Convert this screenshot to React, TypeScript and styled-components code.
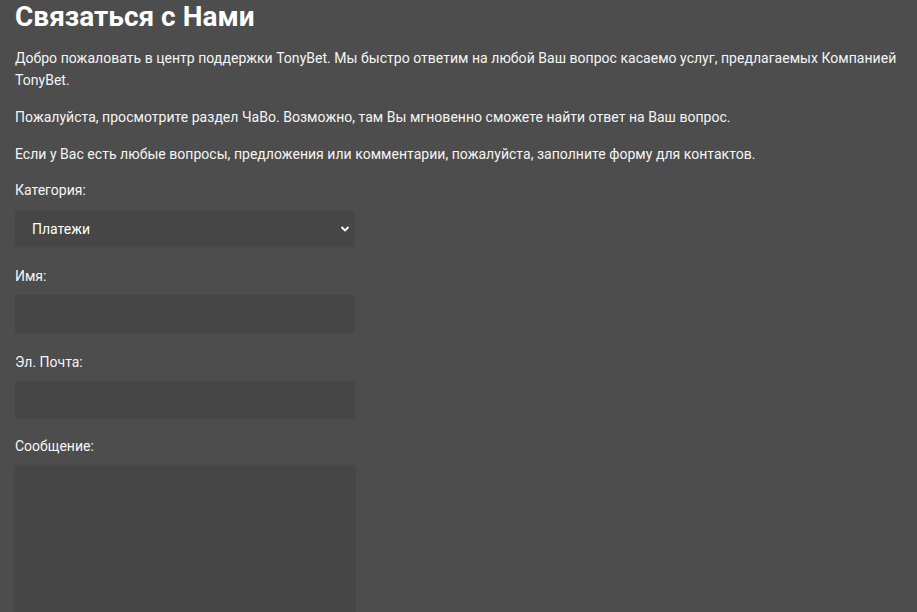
import React from "react";
import styled, { createGlobalStyle } from "styled-components";

const Global = createGlobalStyle`
  html, body { margin: 0; padding: 0; background: #4d4d4d; }
  body { font-family: Roboto, "Liberation Sans", Arial, sans-serif; color: #f5f5f5; }
  * { box-sizing: border-box; }
`;

const Page = styled.main`
  padding: 0 15px 40px 15px;
  min-height: 100vh;
  background: #4d4d4d;
`;

const Title = styled.h1`
  margin: 0;
  font-size: 28px;
  line-height: 33px;
  font-weight: 700;
  color: #ffffff;
`;

const Text = styled.p`
  margin: 15px 0 0 0;
  font-size: 14px;
  line-height: 22px;
  letter-spacing: 0.03px;
  color: #f5f5f5;
`;

const Intro = styled.div`
  padding-top: 14px;
  ${Text}:first-child { margin-top: 0; }
`;

const Form = styled.form`
  display: flex;
  flex-direction: column;
  gap: 18px;
  margin-top: 14px;
  width: 340px;
`;

const Field = styled.div<{ $gap?: number; $shift?: number }>`
  display: flex;
  flex-direction: column;
  gap: ${(p) => p.$gap ?? 8}px;
  margin-top: ${(p) => p.$shift ?? 0}px;
`;

const Label = styled.label`
  font-size: 14px;
  line-height: 22px;
  color: #f5f5f5;
`;

const SelectWrap = styled.div`
  position: relative;
  height: 36px;
`;

const Select = styled.select`
  appearance: none;
  -webkit-appearance: none;
  width: 100%;
  height: 100%;
  border: none;
  border-radius: 2px;
  background: #464646;
  color: #ffffff;
  font-family: Roboto, "Liberation Sans", Arial, sans-serif;
  font-size: 14px;
  padding: 0 30px 0 17px;
  outline: none;
`;

const Chevron = styled.svg`
  position: absolute;
  right: 5px;
  top: 50%;
  width: 10px;
  height: 8px;
  margin-top: -4px;
  pointer-events: none;
`;

const Input = styled.input`
  width: 100%;
  height: 38px;
  border: none;
  border-radius: 2px;
  background: #464646;
  color: #fff;
  font-family: Roboto, "Liberation Sans", Arial, sans-serif;
  font-size: 14px;
  padding: 0 17px;
  outline: none;
`;

const TextArea = styled.textarea`
  width: 342px;
  margin-left: -1px;
  height: 200px;
  border: none;
  border-radius: 4px;
  background: #464646;
  color: #fff;
  resize: none;
  outline: none;
  font-family: Roboto, "Liberation Sans", Arial, sans-serif;
  font-size: 14px;
  padding: 10px 17px;
`;

export default function App() {
  return (
    <>
      <Global />
      <Page>
        <Title>Связаться с Нами</Title>
        <Intro>
          <Text>
            Добро пожаловать в центр поддержки TonyBet. Мы быстро ответим на любой Ваш вопрос касаемо услуг, предлагаемых Компанией TonyBet.
          </Text>
          <Text>
            Пожалуйста, просмотрите раздел ЧаВо. Возможно, там Вы мгновенно сможете найти ответ на Ваш вопрос.
          </Text>
          <Text>
            Если у Вас есть любые вопросы, предложения или комментарии, пожалуйста, заполните форму для контактов.
          </Text>
        </Intro>
        <Form onSubmit={(e) => e.preventDefault()}>
          <Field $gap={10}>
            <Label htmlFor="cat">Категория:</Label>
            <SelectWrap>
              <Select id="cat" defaultValue="pay">
                <option value="pay">Платежи</option>
                <option value="acc">Аккаунт</option>
              </Select>
              <Chevron viewBox="0 0 10 8">
                <path d="M1.5 2 L5 5.5 L8.5 2" fill="none" stroke="#ffffff" strokeWidth="1.8" />
              </Chevron>
            </SelectWrap>
          </Field>
          <Field>
            <Label htmlFor="name">Имя:</Label>
            <Input id="name" type="text" />
          </Field>
          <Field>
            <Label htmlFor="email">Эл. Почта:</Label>
            <Input id="email" type="email" />
          </Field>
          <Field $shift={-2}>
            <Label htmlFor="msg">Сообщение:</Label>
            <TextArea id="msg" />
          </Field>
        </Form>
      </Page>
    </>
  );
}
